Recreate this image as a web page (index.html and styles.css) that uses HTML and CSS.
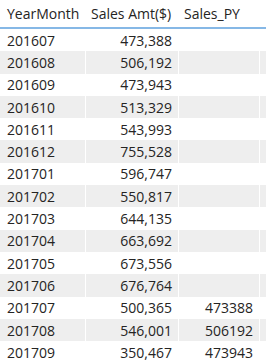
FILE: index.html
```html
<!DOCTYPE html>
<html lang="en">
<head>
    <meta charset="UTF-8">
    <title>Sales table</title>
    <link rel="stylesheet" href="styles.css">
</head>
<body>
    <div class="table">
        <div class="row head">
            <div class="cell">YearMonth</div>
            <div class="cell">Sales Amt($)</div>
            <div class="cell">Sales_PY</div>
            <div class="cell"></div>
        </div>
        <div id="rows"></div>
    </div>

    <script>
        // data: year-month, sales amount, sales previous year
        const data = [
            ['201607', '473,388', ''],
            ['201608', '506,192', ''],
            ['201609', '473,943', ''],
            ['201610', '513,329', ''],
            ['201611', '543,993', ''],
            ['201612', '755,528', ''],
            ['201701', '596,747', ''],
            ['201702', '550,817', ''],
            ['201703', '644,135', ''],
            ['201704', '663,692', ''],
            ['201705', '673,556', ''],
            ['201706', '676,764', ''],
            ['201707', '500,365', '473388'],
            ['201708', '546,001', '506192'],
            ['201709', '350,467', '473943']
        ];

        const rowsDiv = document.getElementById('rows');
        data.forEach(function(d) {
            const row = document.createElement('div');
            row.classList.add('row');
            row.innerHTML = `
                <div class="cell">${d[0]}</div>
                <div class="cell num">${d[1]}</div>
                <div class="cell num">${d[2]}</div>
                <div class="cell"></div>
            `;
            rowsDiv.appendChild(row);
        });
    </script>
</body>
</html>
```

FILE: styles.css
```css
body {
    margin: 0;
    background: white;
    font-family: "Open Sans", "Noto Sans", sans-serif;
    font-size: 14px;
    color: #252423;
}

.table {
    width: 266px;
}

.row {
    display: grid;
    grid-template-columns: 85px 92px 80px 1fr;
    column-gap: 1px;
    height: 22.3px;
    align-items: stretch;
}

.cell {
    padding: 0 6px 0 7px;
    display: flex;
    align-items: center;
    white-space: nowrap;
}

.cell.num {
    justify-content: flex-end;
}

.row:nth-child(even) .cell {
    background: #eeeeee;
}

.row.head {
    height: 27px;
    border-bottom: 2px solid #86b8e6;
}

.row.head .cell {
    padding-left: 5px;
    padding-right: 0;
}

.row.head .cell:first-child {
    padding-left: 7px;
}
```
